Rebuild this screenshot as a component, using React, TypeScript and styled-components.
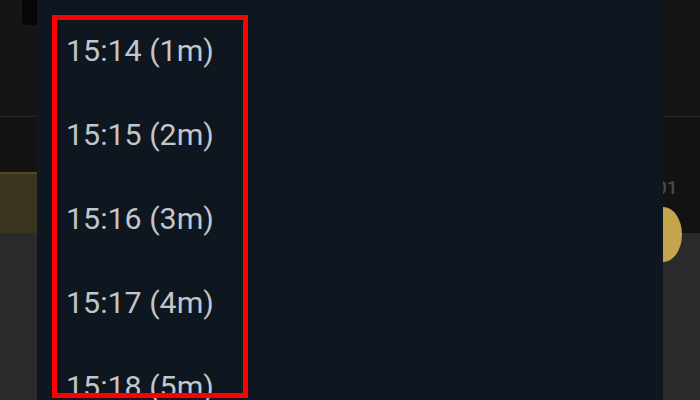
import React from "react";
import styled, { createGlobalStyle } from "styled-components";

const Global = createGlobalStyle`
  html, body { margin: 0; padding: 0; background: #121212; }
  body { font-family: Roboto, "Noto Sans", sans-serif; }
`;

const Page = styled.div`
  display: grid;
  grid-template-columns: 37px 626px 37px;
  width: 700px;
  height: 400px;
  overflow: hidden;
`;

const SideColumn = styled.div`
  position: relative;
  display: flex;
  flex-direction: column;
  overflow: hidden;
  background: #2a2a2a;
`;

const SideHeader = styled.div`
  height: 117px;
  flex: none;
  display: flex;
  justify-content: flex-end;
  background: #151515;
  border-bottom: 1px solid #262626;
  box-sizing: border-box;
`;

const HeaderTab = styled.div`
  width: 15px;
  height: 25px;
  background: #060606;
  border-bottom-left-radius: 5px;
`;

const SideDark = styled.div<{ $h: number }>`
  height: ${(p) => p.$h}px;
  flex: none;
  background: #121212;
  display: flex;
  align-items: flex-end;
`;

const OliveBand = styled.div`
  height: 61px;
  flex: none;
  box-sizing: border-box;
  background: #39341f;
  border-top: 2px solid #514a28;
`;

const SideRest = styled.div`
  flex: 1;
  background: #2a2a2a;
`;

const AxisLabel = styled.span`
  font-family: Roboto, sans-serif;
  font-size: 19px;
  font-weight: 500;
  color: #4a4a4a;
  margin-left: -7px;
  margin-bottom: 36px;
  line-height: 1;
`;

const Knob = styled.div`
  position: absolute;
  left: 0;
  top: 207px;
  width: 19px;
  height: 55px;
  background: #c4a64c;
  border-radius: 0 100% 100% 0 / 0 50% 50% 0;
`;

const Panel = styled.div`
  position: relative;
  background: #0e1620;
  overflow: hidden;
`;

const List = styled.ul`
  list-style: none;
  margin: 0;
  padding: 9px 0 0 29px;
`;

const Item = styled.li`
  height: 84px;
  line-height: 84px;
  font-family: Roboto, sans-serif;
  font-size: 30.4px;
  color: #c2c6ca;
  white-space: nowrap;
`;

const Highlight = styled.div`
  position: absolute;
  left: 15px;
  top: 15px;
  width: 196px;
  height: 383px;
  box-sizing: border-box;
  border: 5px solid #ff0000;
  pointer-events: none;
`;

const items = [
  "15:14 (1m)",
  "15:15 (2m)",
  "15:16 (3m)",
  "15:17 (4m)",
  "15:18 (5m)",
];

export default function App() {
  return (
    <>
      <Global />
      <Page>
        <SideColumn>
          <SideHeader>
            <HeaderTab />
          </SideHeader>
          <SideDark $h={55} />
          <OliveBand />
          <SideRest />
        </SideColumn>
        <Panel>
          <List>
            {items.map((t) => (
              <Item key={t}>{t}</Item>
            ))}
          </List>
          <Highlight />
        </Panel>
        <SideColumn>
          <SideHeader />
          <SideDark $h={116}>
            <AxisLabel>01</AxisLabel>
          </SideDark>
          <SideRest />
          <Knob />
        </SideColumn>
      </Page>
    </>
  );
}
